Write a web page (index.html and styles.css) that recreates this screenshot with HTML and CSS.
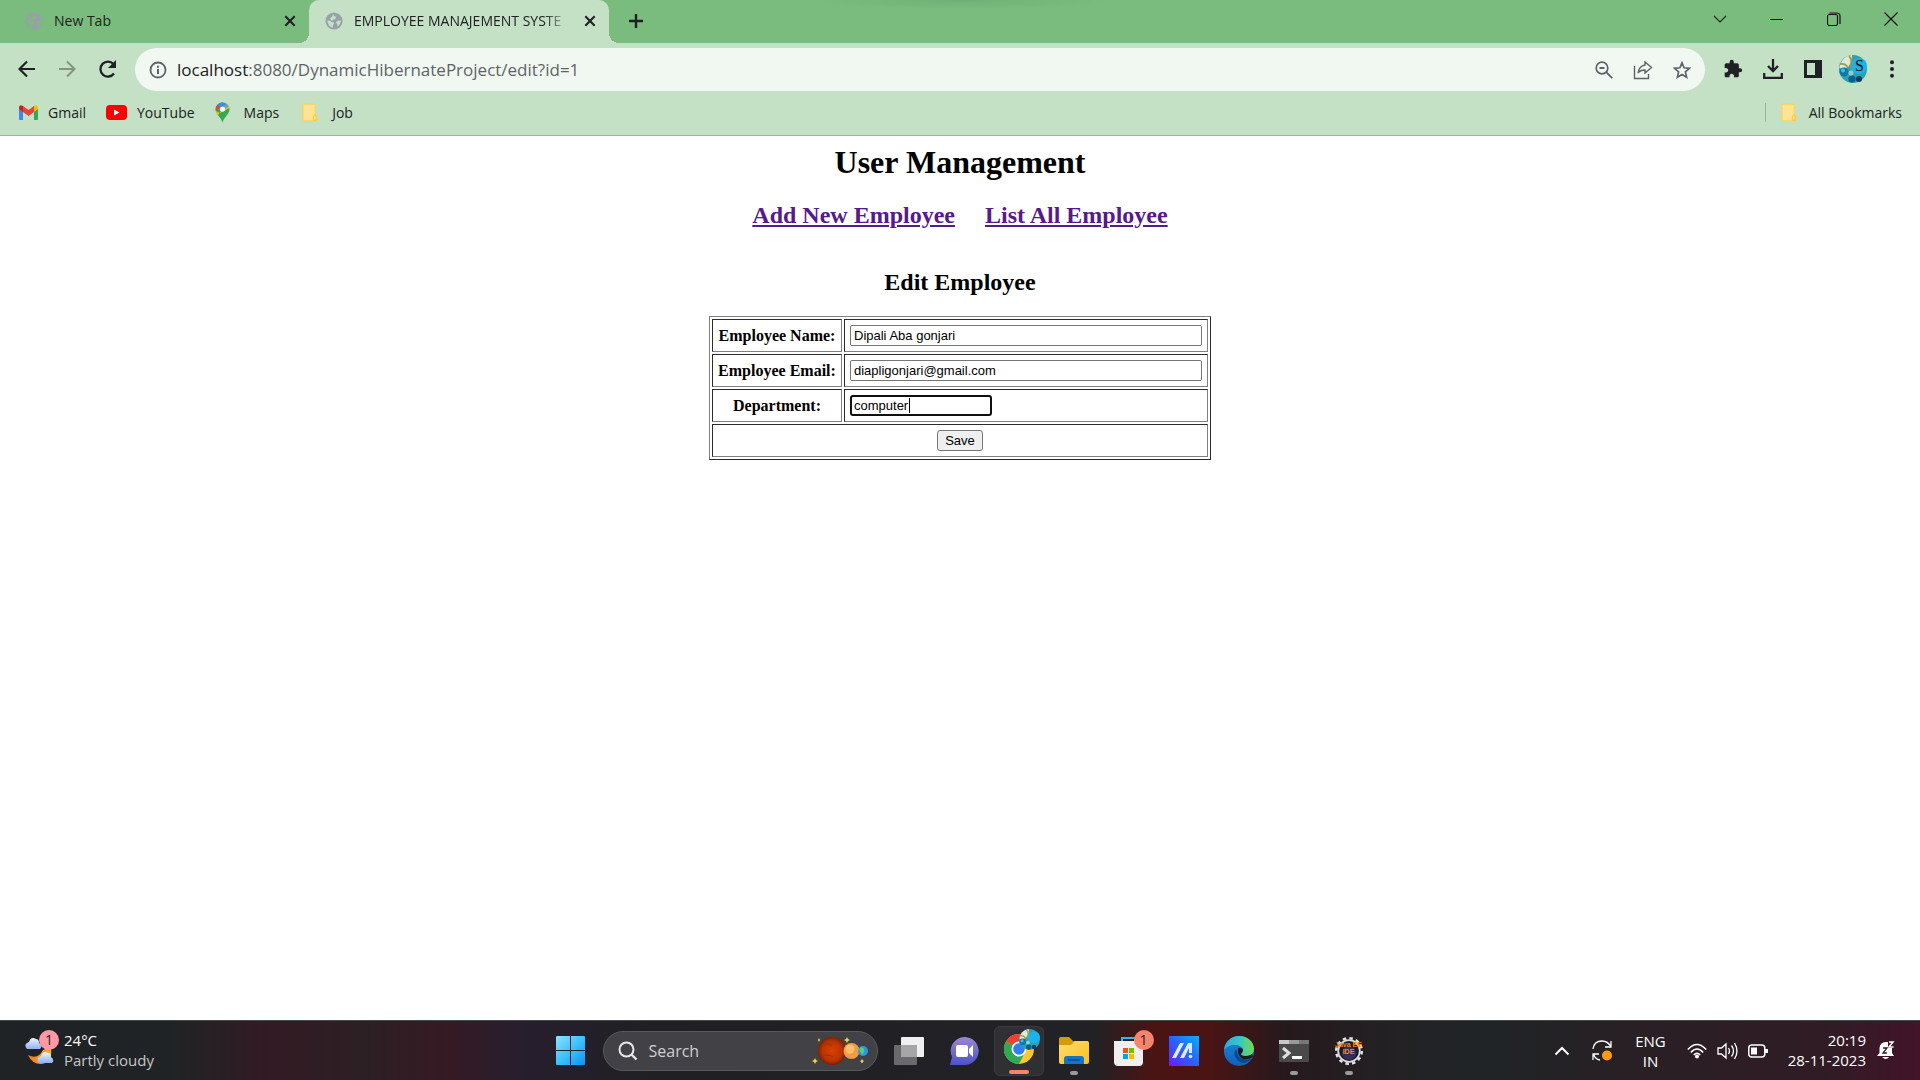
FILE: index.html
```
<!DOCTYPE html>
<html lang="en">
<head>
<meta charset="utf-8">
<title>EMPLOYEE MANAJEMENT SYSTEM</title>
<link rel="stylesheet" href="styles.css">
</head>
<body>
<svg class="defs" width="0" height="0" aria-hidden="true">
  <defs>
    <symbol id="globe" viewBox="0 0 20 20"><circle cx="10" cy="10" r="9.500" fill="#9aa0a8"/><path d="M2.500 9.500q3-.5 5 1.500 2 0 3 1.500-2 1-2 5Q3 16 2.500 9.500zM9 2.500q1 3 3 2.500 1 2-1 3-3 0-3 2-2-1-2.500-3Q8 6 9 2.500zM12 11q3-2 5.500-1.500 0 4-3.500 6.500 0-3-2-5z" fill="currentColor"/></symbol>
    <symbol id="cross" viewBox="0 0 12 12"><path d="M2 2l8 8M10 2l-8 8" stroke="#202124" stroke-width="1.800" fill="none"/></symbol>
    <symbol id="folder" viewBox="0 0 18 20"><path d="M2 1h13v12l2 1v4l-2 1H2z" fill="#ffe593" stroke="#fbd45c" stroke-width="1.4"/><path d="M13 18v-4q2-2 3 0v4z" fill="#ffe593" stroke="#f2c53e"/></symbol>
    <radialGradient id="mars"><stop offset="0" stop-color="#d84300"/><stop offset=".7" stop-color="#b93400"/><stop offset="1" stop-color="#7c2106"/></radialGradient>
    <linearGradient id="win" x2="1" y2="1"><stop offset="0" stop-color="#8be2ff"/><stop offset=".5" stop-color="#3cc2fb"/><stop offset="1" stop-color="#0a93f5"/></linearGradient>
    <linearGradient id="chat" x2="0" y2="1"><stop offset="0" stop-color="#9c86cd"/><stop offset="1" stop-color="#4b53c9"/></linearGradient>
    <linearGradient id="fold" x2="1" y2="1"><stop offset="0" stop-color="#ffdf6b"/><stop offset="1" stop-color="#fdbf1d"/></linearGradient>
    <linearGradient id="asus" x1="0" y1="1" x2="1" y2="0"><stop offset="0" stop-color="#6a1cf5"/><stop offset=".5" stop-color="#2a62fb"/><stop offset="1" stop-color="#00b4ff"/></linearGradient>
    <linearGradient id="edgeTop" x2="1" y2="0"><stop offset="0" stop-color="#2fa8e8"/><stop offset=".5" stop-color="#35c7c3"/><stop offset="1" stop-color="#74db4b"/></linearGradient>
    <linearGradient id="edgeLow" x2="0" y2="1"><stop offset="0" stop-color="#1b8ad8"/><stop offset="1" stop-color="#1160b5"/></linearGradient>
    <linearGradient id="moon" x2="1" y2="0"><stop offset="0" stop-color="#ef7d1a"/><stop offset="1" stop-color="#fbb02c"/></linearGradient>
    <linearGradient id="cloud" x2="0" y2="1"><stop offset="0" stop-color="#eef5ff"/><stop offset="1" stop-color="#8fb2f0"/></linearGradient>
    <symbol id="avatar" viewBox="0 0 28 28"><circle cx="14" cy="14" r="14" fill="#2f9fb5"/><path d="M.5 13A14 14 0 0 1 13 0q1 8-4 12-4 3-8.500 1z" fill="#dfe9d6"/><path d="M1 9q6-1 8 4M10 1q4 4 1 10 4 1 2 7" fill="none" stroke="#a39a4a" stroke-width="1.800"/><circle cx="20" cy="11" r="8" fill="#18b4ea"/><circle cx="5" cy="17" r="4.500" fill="#0d78ac"/><circle cx="4" cy="15.500" r="2" fill="#3cc0e4"/><circle cx="13" cy="24" r="3.600" fill="#0b5e92"/><circle cx="20" cy="24" r="3" fill="#073e5c"/><circle cx="12" cy="18" r="2.500" fill="#8fd0c4"/></symbol>
  </defs>
</svg>

<header class="browser">
  <div class="tabstrip">
    <div class="tab">
      <svg class="favicon dim" viewBox="0 0 20 20"><use href="#globe"/></svg>
      <span class="tab-title">New Tab</span>
      <button class="plain" aria-label="Close tab"><svg width="14" height="14"><use href="#cross"/></svg></button>
    </div>
    <div class="tab active">
      <svg class="favicon" viewBox="0 0 20 20"><use href="#globe"/></svg>
      <span class="tab-title fade">EMPLOYEE MANAJEMENT SYSTE</span>
      <button class="plain" aria-label="Close tab"><svg width="14" height="14"><use href="#cross"/></svg></button>
    </div>
    <button class="plain new-tab" aria-label="New tab"><svg width="16" height="16"><path d="M8 1v14M1 8h14" stroke="#202124" stroke-width="2.4"/></svg></button>
    <div class="window-controls">
      <button class="plain" aria-label="Search tabs"><svg width="14" height="14"><path d="M1 4l6 6 6-6" fill="none" stroke="#1d2b1e" stroke-width="1.2"/></svg></button>
      <button class="plain" aria-label="Minimize"><svg width="14" height="14"><path d="M0 7.500h13" stroke="#111"/></svg></button>
      <button class="plain" aria-label="Restore"><svg width="14" height="14"><rect x=".5" y="2.500" width="10" height="11" rx="2" fill="none" stroke="#111" stroke-width="1.200"/><path d="M2.500 1h7q3.500 0 3.500 3v8" fill="none" stroke="#111" stroke-width="1.200"/></svg></button>
      <button class="plain" aria-label="Close"><svg width="14" height="14"><path d="M.5.5l13 13M13.500.5l-13 13" stroke="#111" stroke-width="1.200"/></svg></button>
    </div>
  </div>

  <div class="toolbar">
    <div class="nav">
      <button class="plain" aria-label="Back"><svg width="18" height="18"><path d="M17 9H2M9 1.500L1.500 9 9 16.500" fill="none" stroke="#202124" stroke-width="2.200"/></svg></button>
      <button class="plain" aria-label="Forward"><svg width="18" height="18"><path d="M1 9h15M9 1.500L16.500 9 9 16.500" fill="none" stroke="#83957f" stroke-width="2"/></svg></button>
      <button class="plain" aria-label="Reload"><svg width="20" height="20"><path d="M16 14.500A7.500 7.500 0 1 1 15.500 5" fill="none" stroke="#202124" stroke-width="2.300"/><path d="M18 1v8h-8z" fill="#202124"/></svg></button>
    </div>
    <div class="omnibox">
      <svg width="18" height="18"><circle cx="9" cy="9" r="7.500" fill="none" stroke="#5f6368" stroke-width="1.800"/><path d="M9 8v5M9 4.800v2" stroke="#5f6368" stroke-width="2"/></svg>
      <span class="url"><b>localhost</b>:8080/DynamicHibernateProject/edit?id=1</span>
      <button class="plain" aria-label="Zoom"><svg width="18" height="18"><circle cx="7" cy="7" r="5.800" fill="none" stroke="#5f6368" stroke-width="1.700"/><path d="M4.500 7h5M11.200 11.200l6 6" stroke="#5f6368" stroke-width="1.800"/></svg></button>
      <button class="plain" aria-label="Share"><svg width="20" height="20"><path d="M1.500 6v12.500h14V14" fill="none" stroke="#5f6368" stroke-width="1.400"/><path d="M12 2l6.500 5.500L12 13v-3q-5 0-7 3 1-7 7-8z" fill="none" stroke="#5f6368" stroke-width="1.400"/></svg></button>
      <button class="plain" aria-label="Bookmark this tab"><svg width="18" height="18"><path d="M9 1.800l2.100 5 5.400.5-4.100 3.600 1.200 5.300L9 13.400l-4.600 2.800 1.200-5.300-4.100-3.600 5.400-.5z" fill="none" stroke="#5f6368" stroke-width="1.700"/></svg></button>
    </div>
    <div class="actions">
      <button class="plain" aria-label="Extensions"><svg width="20" height="20" viewBox="0 0 24 24"><path fill="#202124" d="M20.500 11H19V7c0-1.100-.9-2-2-2h-4V3.500a2.500 2.500 0 0 0-5 0V5H4c-1.100 0-2 .9-2 2v3.800h1.500c1.500 0 2.700 1.200 2.700 2.700s-1.200 2.700-2.700 2.700H2V20c0 1.100.9 2 2 2h3.800v-1.500c0-1.500 1.200-2.700 2.700-2.700s2.700 1.200 2.700 2.700V22H17c1.100 0 2-.9 2-2v-4h1.500a2.500 2.500 0 0 0 0-5z"/></svg></button>
      <button class="plain" aria-label="Downloads"><svg width="20" height="20"><path d="M10 0v11M5 7l5 5 5-5M1.200 14v4.800h17.600V14" fill="none" stroke="#202124" stroke-width="2.300"/></svg></button>
      <button class="plain" aria-label="Side panel"><svg width="20" height="20"><path d="M1 1h18v18H1zM4 4v12h8V4z" fill="#202124" fill-rule="evenodd"/></svg></button>
      <button class="plain profile" aria-label="Profile"><svg width="28" height="28"><use href="#avatar"/></svg><span class="initial">S</span></button>
      <button class="plain" aria-label="Menu"><svg width="6" height="18"><g fill="#202124"><circle cx="3" cy="2.200" r="2"/><circle cx="3" cy="9" r="2"/><circle cx="3" cy="15.800" r="2"/></g></svg></button>
    </div>
  </div>

  <nav class="bookmarks">
    <a href="#"><svg width="19" height="15"><path d="M0 2v12q0 1 1 1h3V5z" fill="#4285f4"/><path d="M19 2v12q0 1-1 1h-3V5z" fill="#34a853"/><path d="M15 1l-.1 6L19 4V2q-1-3-4-1z" fill="#fbbc04"/><path d="M4 1v6l5.500 4L15 7V1L9.500 5z" fill="#ea4335"/><path d="M0 4l4 3V1Q1-1 0 2z" fill="#c5221f"/></svg>Gmail</a>
    <a href="#"><svg width="21" height="15"><rect width="21" height="15" rx="4" fill="#f00"/><path d="M8 4.500v6l5.500-3z" fill="#fff"/></svg>YouTube</a>
    <a href="#" class="spaced"><svg width="15" height="21"><path d="M7.500 21C7 16 1 13 .5 7.500A7 7 0 0 1 14.500 7.500C14 13 8 16 7.500 21z" fill="#34a853"/><path d="M2.500 2.500A7 7 0 0 1 10 1L5 7z" fill="#4285f4"/><path d="M2.500 2.500Q0 5 .6 8.500L5.500 6z" fill="#ea4335"/><path d="M.8 9Q1.200 11 3 13l9-11q2 2 2.500 4L5 11z" fill="#fbbc04"/><path d="M10 1q2 .6 3.500 3L9 8z" fill="#5b9cf8"/><circle cx="7.500" cy="7" r="2.600" fill="#fff"/></svg>Maps</a>
    <a href="#" class="spaced"><svg width="17" height="19"><use href="#folder"/></svg>Job</a>
    <a href="#" class="all"><svg width="17" height="19"><use href="#folder"/></svg>All Bookmarks</a>
  </nav>
</header>

<main class="page">
  <h1>User Management</h1>
  <h2 class="links"><a href="#">Add New Employee</a><a href="#">List All Employee</a></h2>
  <form>
    <table class="form-table">
      <caption><h2>Edit Employee</h2></caption>
      <tbody>
        <tr><th><label for="name">Employee Name:</label></th><td><input class="wide" id="name" type="text" value="Dipali Aba gonjari"></td></tr>
        <tr><th><label for="email">Employee Email:</label></th><td><input class="wide" id="email" type="text" value="diapligonjari@gmail.com"></td></tr>
        <tr><th><label for="dept">Department:</label></th><td><div class="field"><input class="focused" id="dept" type="text" value="computer"><span class="caret"></span></div></td></tr>
        <tr><td colspan="2" class="submit"><button type="button" class="save">Save</button></td></tr>
      </tbody>
    </table>
  </form>
</main>

<footer class="taskbar">
  <div class="weather">
    <div class="badge-host">
      <svg width="30" height="36"><path d="M27 17q2 14-10 15-9 0-13-9 10 5 15-5 3-2 8-1z" fill="url(#moon)"/><path d="M3 17q-4-5 2-7 2-6 7-3 3 0 3 4 4 3 1 6z" fill="url(#cloud)"/><path d="M15 31q-4-5 2-7 2-6 7-3 3 0 3 4 4 3 1 6z" fill="url(#cloud)"/></svg>
      <span class="badge pink">1</span>
    </div>
    <div class="stack"><span>24°C</span><span class="muted">Partly cloudy</span></div>
  </div>

  <div class="apps">
    <button class="plain app" aria-label="Start"><svg width="30" height="30"><path d="M0 1q0-1 1-1h13v14H0zM15 0h13q1 0 1 1v13H15zM0 15h14v14H1q-1 0-1-1zM15 15h14v13q0 1-1 1H15z" fill="url(#win)"/></svg></button>
    <label class="search">
      <svg width="20" height="20"><circle cx="8.500" cy="8.500" r="7" fill="none" stroke="#e8e8ea" stroke-width="2"/><path d="M13.500 13.500l5 5" stroke="#e8e8ea" stroke-width="2.400"/></svg>
      <input type="text" placeholder="Search" aria-label="Search">
      <svg width="56" height="30"><circle cx="20" cy="15" r="14" fill="url(#mars)"/><path d="M12 9q5-2 8 1M11 20q6-2 10 1" fill="none" stroke="#a83203" stroke-width="1.200"/><circle cx="39.500" cy="15" r="8" fill="#f49a45"/><circle cx="38" cy="13" r="4.500" fill="#ffc069"/><circle cx="51" cy="15" r="5" fill="#2b95e8"/><path d="M49 11q4 1 3 5l-2 3q-1-3-3-5z" fill="#5fcf6b"/><path d="M35 1l1 2 2 1-2 1-1 2-1-2-2-1 2-1zM3 22l1 2 2 1-2 1-1 2-1-2-2-1 2-1zM50 23l1 1.500 1 .5-1 1-1 1.500-1-1.500-1-1 1-.5zM7 2l1 2-1 2-1-2z" fill="#f6cf3f"/></svg>
    </label>
    <button class="plain app" aria-label="Task view"><svg width="30" height="28"><rect x="7" width="23" height="20" rx="1" fill="#f0f0f0"/><rect y="8" width="23" height="20" rx="1" fill="#6a6a6c"/><path d="M7 8h16v12H7z" fill="#a6a6a6"/></svg></button>
    <button class="plain app" aria-label="Chat"><svg width="30" height="30"><path d="M1 29l2-8A14 14 0 1 1 15 29z" fill="url(#chat)"/><rect x="7" y="9" width="12" height="12" rx="2" fill="#fff"/><path d="M20 13l4-4v12l-4-4z" fill="#fff"/></svg></button>
    <button class="plain app current" aria-label="Chrome"><svg width="36" height="36"><circle cx="15" cy="20" r="15" fill="#fcc934"/><path d="M15 20L2 12.500A15 15 0 0 1 28 12.500H15z" fill="#ea4335"/><path d="M2 12.500A15 15 0 0 0 15 35l6-11.500L15 20z" fill="#31a952"/><circle cx="15" cy="20" r="7.500" fill="#fff"/><circle cx="15" cy="20" r="5.800" fill="#2f7ff0"/><svg x="15" y="0" width="21" height="21"><use href="#avatar"/></svg></svg></button>
    <button class="plain app open" aria-label="File Explorer"><svg width="30" height="28"><path d="M0 2q0-2 2-2h8l4 4h15v6H0z" fill="#d79a09"/><path d="M0 8h12l4-4h12q2 0 2 2v19q0 2-2 2H2q-2 0-2-2z" fill="url(#fold)"/><path d="M5 27v-5q0-3 3-3h14q3 0 3 3v5z" fill="#1473c6"/><path d="M9 23h12" stroke="#0b4d91" stroke-width="1.500"/></svg></button>
    <button class="plain app badge-host" aria-label="Microsoft Store"><svg width="30" height="30"><path d="M8 6V2h13v4" fill="none" stroke="#39b5ee" stroke-width="2"/><path d="M0 5h29v21q0 4-4 4H4q-4 0-4-4z" fill="#efefef"/><path d="M9 12h5v5H9z" fill="#f25022"/><path d="M15 12h5v5h-5z" fill="#7fba00"/><path d="M9 18h5v5H9z" fill="#00a4ef"/><path d="M15 18h5v5h-5z" fill="#ffb900"/></svg><span class="badge coral">1</span></button>
    <button class="plain app" aria-label="MyASUS"><svg width="30" height="30"><path d="M0 0h30v30H0z" fill="url(#asus)"/><path d="M3 22L11 7h4L7 22zM11 22L19 7h4v10h-3v-5l-5 10z" fill="#dcecff"/><circle cx="21.500" cy="20.500" r="1.800" fill="#dcecff"/></svg></button>
    <button class="plain app" aria-label="Edge"><svg width="30" height="30"><circle cx="15" cy="15" r="15" fill="url(#edgeLow)"/><path d="M0 14C1 5 8 0 15 0c9 0 15 6 15 13 0 5-4 7-8 7-3 0-5-1-5-2s2-2 2-4c0-3-4-5-8-5-5 0-9 2-11 5z" fill="url(#edgeTop)"/><path d="M12 13q-3 4 0 9t8 5q5-1 8-5-5 3-10 1-5-3-5-7z" fill="#0c468e"/><path d="M14 12q4-1 5 2 0 2-2 4 0 2 5 2 4 0 6-2l1 3q-5 3-10 2-6-3-5-11z" fill="#1f1c20"/></svg></button>
    <button class="plain app open" aria-label="Terminal"><svg width="30" height="22"><rect width="30" height="22" rx="1" fill="#4a4a4a"/><path d="M0 0h10v4H0z" fill="#c9c9c9"/><path d="M10 0h10v4H10z" fill="#9a9a9a"/><path d="M20 0h10v4H20z" fill="#777"/><path d="M4 8l6 5-6 5" fill="none" stroke="#ddd" stroke-width="3"/><path d="M13 17.500h10" stroke="#fff" stroke-width="3"/></svg></button>
    <button class="plain app open badge-host" aria-label="Eclipse"><svg width="30" height="30"><circle cx="15" cy="15" r="12.800" fill="none" stroke="#e2e2e2" stroke-width="2.500" stroke-dasharray="3.500 3.200"/><circle cx="15" cy="15" r="10.800" fill="#1b1a2b" stroke="#dcdcdc" stroke-width="1.800"/><circle cx="15" cy="17" r="7" fill="#3a2a58"/></svg><span class="ide">Java EE<br>IDE</span></button>
  </div>

  <div class="tray">
    <svg width="16" height="10"><path d="M1.500 8.500L8 2l6.500 6.500" fill="none" stroke="#fff" stroke-width="2"/></svg>
    <svg class="sync" width="22" height="22"><path d="M1 9q1-8 9-8 6 0 9 6M19 1v6h-6M8 20q-5-1-6-5M1 20v-6h6" fill="none" stroke="#fff" stroke-width="1.300"/><circle cx="15" cy="15.500" r="5" fill="#ff9b0c"/></svg>
    <div class="stack center"><span>ENG</span><span>IN</span></div>
    <div class="status">
      <svg width="20" height="16"><path d="M.8 6.500q9.200-10 18.400 0M3.800 9.500q6.200-7 12.400 0M6.800 12q3.200-3.500 6.400 0" fill="none" stroke="#fff" stroke-width="1.500"/><circle cx="10" cy="13.500" r="2" fill="#fff"/></svg>
      <svg width="21" height="18"><path d="M1 6h3.500L9 2v14l-4.500-4H1zM11.500 6q2 3 0 6M14.500 3.500q4 5.500 0 11M17.500 1q5 8 0 16" fill="none" stroke="#fff" stroke-width="1.300"/></svg>
      <svg width="20" height="14"><rect x=".8" y="1" width="16" height="12" rx="3" fill="none" stroke="#fff" stroke-width="1.500"/><path d="M3 3.500h6v7H3zM17 5h3v4h-3z" fill="#fff"/></svg>
    </div>
    <div class="stack right"><span>20:19</span><span>28-11-2023</span></div>
    <svg width="18" height="19"><path d="M0 15l2.500-3V7Q3 1 9 1h2v6h4v5l2 3zM5 16h7q-3 4-7 0z" fill="#fff"/><path d="M12 1h4l-4 5h4.500" fill="none" stroke="#fff" stroke-width="1.500"/><path d="M6 7h4l-4 5h4" fill="none" stroke="#2a1c22" stroke-width="1.300"/></svg>
  </div>
</footer>
</body>
</html>
```
FILE: styles.css
```
* { box-sizing: border-box; }
body {
  margin: 0;
  min-height: 100vh;
  display: flex;
  flex-direction: column;
  background: #fff;
  font-family: "Liberation Serif", serif;
  font-size: 16px;
}
svg { display: block; flex: none; }
.defs { position: absolute; }
.plain {
  display: flex;
  align-items: center;
  justify-content: center;
  flex: none;
  padding: 0;
  border: 0;
  background: none;
}

/* Browser chrome */
.browser {
  background: #c4e1c5;
  border-bottom: 1px solid #97b899;
  font-family: "Open Sans", "Noto Sans", sans-serif;
  color: #202124;
}
.tabstrip {
  display: flex;
  height: 43px;
  padding-left: 9px;
  background: radial-gradient(ellipse 150px 9px at 50% 0, #70b075, #7abc7d) #7abc7d;
}
.tab {
  display: flex;
  align-items: center;
  width: 300px;
  padding: 0 12px 2px 16px;
  font-size: 14px;
}
.tab.active { background: #c4e1c5; border-radius: 10px 10px 0 0; position: relative; }
.tab.active::before, .tab.active::after {
  content: "";
  position: absolute;
  bottom: 0;
  width: 10px;
  height: 10px;
}
.tab.active::before { left: -10px; background: radial-gradient(circle at 0 0, transparent 10px, #c4e1c5 10px); }
.tab.active::after { right: -10px; background: radial-gradient(circle at 100% 0, transparent 10px, #c4e1c5 10px); }
.favicon { width: 18px; height: 18px; margin-right: 11px; color: #c4e1c5; }
.favicon.dim { color: #7abc7d; }
.tab-title { flex: 1; overflow: hidden; white-space: nowrap; }
.tab-title.fade { mask-image: linear-gradient(90deg, #000 88%, transparent); margin-right: 13px; }
.new-tab { width: 54px; padding-bottom: 1px; }
.window-controls { display: flex; margin-left: auto; padding: 0 1px 6px 0; }
.window-controls button { width: 57px; }

.toolbar { display: flex; align-items: center; padding-top: 5px; }
.nav { display: flex; gap: 22px; padding: 0 17px 2px 18px; }
.omnibox {
  flex: 1;
  display: flex;
  align-items: center;
  gap: 20px;
  height: 43px;
  padding: 0 14px;
  border-radius: 22px;
  background: #f1f8f1;
}
.url { flex: 1; margin-left: -10px; font-size: 17px; color: #5f6368; }
.url b { font-weight: normal; color: #202124; }
.actions { display: flex; gap: 20px; align-items: center; padding: 0 25px 2px 18px; }
.profile { position: relative; margin: 0 2px 0 -4px; }
.initial { position: absolute; left: 16px; top: 2px; font: 16px "Liberation Serif", serif; color: #111; }

.bookmarks { display: flex; align-items: center; height: 44px; padding: 0 18px 2px 19px; font-size: 14px; }
.bookmarks a { display: flex; align-items: center; gap: 10px; margin-right: 20px; color: #202124; text-decoration: none; }
.bookmarks .spaced { gap: 14px; margin-right: 22px; }
.bookmarks .all { margin: 0 0 0 auto; padding-left: 14px; gap: 12px; border-left: 1px solid #97b899; }

/* Page */
.page { flex: 1; padding-top: 8px; text-align: center; color: #000; }
h1, h2 { margin: 0 0 20px; font-weight: bold; }
h1 { font-size: 32px; line-height: 37px; margin-bottom: 21px; }
h2 { font-size: 24px; line-height: 27px; }
.links { display: flex; justify-content: center; gap: 30px; }
.links a { color: #551a8b; }
.form-table { margin: 0 auto; padding: 0; border: 1px outset #808080; border-spacing: 2px; width: 502px; }
.form-table caption { padding-top: 20px; }
.form-table th, .form-table td { padding: 5px; border: 1px inset #808080; text-align: left; }
.form-table th { width: 130px; text-align: center; line-height: 18px; }
.form-table input, .save { display: block; height: 21px; font: 13px "Liberation Sans", sans-serif; }
.form-table input { padding: 1px 3px; border: 1px solid #767676; border-radius: 2px; background: #fff; color: #000; }
.wide { width: 352px; }
.field { position: relative; }
.form-table .focused { width: 142px; padding: 0 2px; border: 2px solid #101010; border-radius: 3px; outline: 0; }
.caret { position: absolute; left: 59px; top: 3px; width: 1px; height: 15px; background: #000; }
.form-table .save { margin: 0 auto; padding: 1px 7px; border: 1px solid #767676; border-radius: 3px; background: #efefef; color: #000; }

/* Taskbar */
.taskbar {
  display: grid;
  grid-template-columns: 1fr auto 1fr;
  align-items: center;
  height: 60px;
  padding: 0 25px 0 24px;
  border-top: 1px solid #45484a;
  background: linear-gradient(90deg, #202325 0, #202325 9%, #331a24 14%, #2c2024 19%, #361a23 23%, #271e2e 27%, #202024 34%, #222125 54%, #222125 57%, #4a1414 60%, #4a1414 63%, #26191d 67%, #222326 74%, #202426 78%, #2a1f25 86%, #301c25 95%, #421429 100%);
  color: #fff;
  font-family: "Open Sans", "Noto Sans", sans-serif;
  font-size: 15px;
}
.weather { display: flex; align-items: center; gap: 10px; padding-bottom: 2px; }
.badge-host { position: relative; }
.badge { position: absolute; display: grid; place-items: center; width: 20px; height: 20px; border-radius: 50%; color: #222; font: 14px "Open Sans", sans-serif; }
.badge.pink { left: 15px; top: -2px; background: #ff99a4; }
.badge.coral { right: 0; top: 4px; background: #f7846b; }
.stack { display: flex; flex-direction: column; font-size: 15px; line-height: 20px; white-space: nowrap; }
.muted { color: #c6c6c6; }
.center { text-align: center; }
.right { text-align: right; padding-bottom: 2px; }
.apps { display: flex; align-items: center; gap: 5px; }
.app { width: 50px; height: 50px; position: relative; }
.app.current { background: #302f33; border: 1px solid #3b3a3e; border-radius: 6px; }
.app.current svg { margin: -8px 0 0 6px; }
.app.open::after, .app.current::after {
  content: "";
  position: absolute;
  bottom: 1px;
  left: 50%;
  width: 8px;
  height: 4px;
  margin-left: -4px;
  border-radius: 2px;
  background: #9a9a9b;
}
.app.current::after { width: 20px; margin-left: -10px; background: #f7846b; }
.ide { position: absolute; top: 15px; left: 0; right: 0; font: bold 7px/7px "Liberation Sans", sans-serif; color: #f08a24; }
.search {
  display: flex;
  align-items: center;
  width: 275px;
  height: 40px;
  padding: 0 9px 0 14px;
  margin: 0 1px 0 2px;
  border: 1px solid #59585c;
  border-radius: 20px;
  background: #424145;
}
.search input { flex: 1; min-width: 0; margin-left: 11px; padding: 0; border: 0; background: none; font: 16px "Open Sans", sans-serif; color: #fff; }
.search input::placeholder { color: #cfcfd1; opacity: 1; }
.tray { display: flex; align-items: center; justify-content: flex-end; }
.sync { margin: 0 21px 0 22px; }
.status { display: flex; align-items: center; gap: 10px; margin: 0 20px 0 21px; }
.tray > :last-child { margin-left: 11px; }
```
